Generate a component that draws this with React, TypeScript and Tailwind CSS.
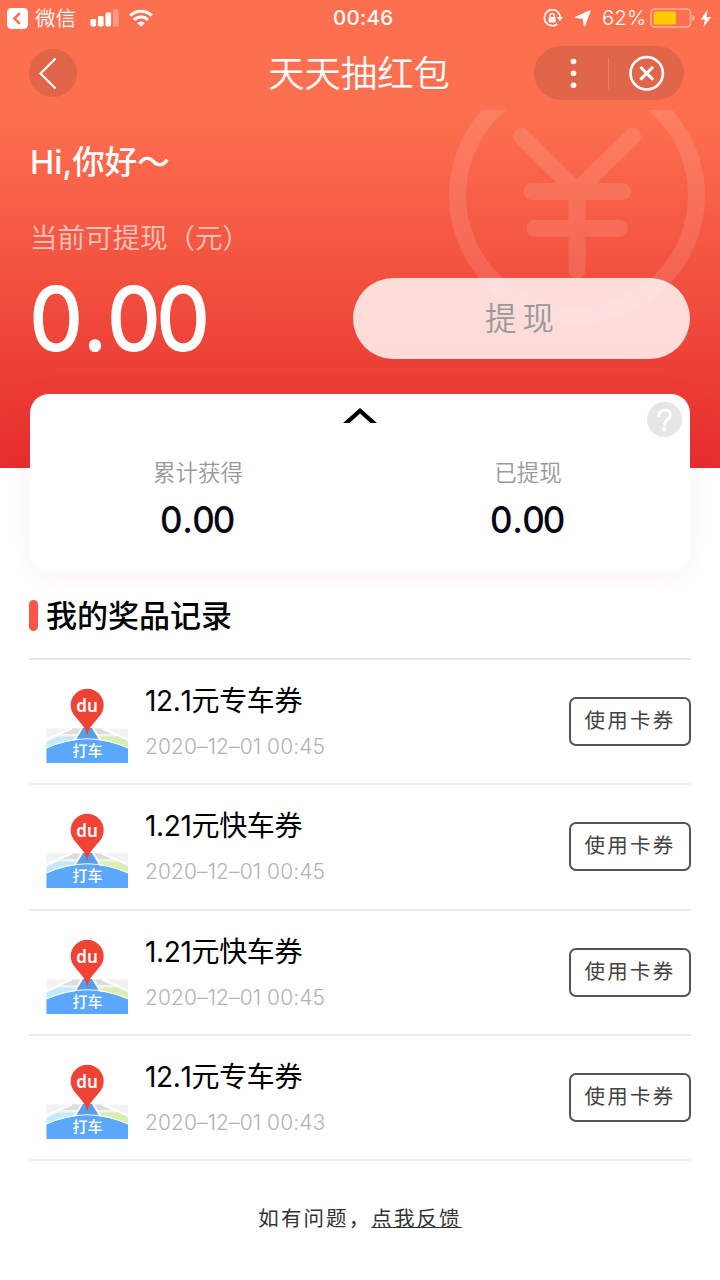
const CJK = "font-['Inter','Noto_Sans_CJK_SC',sans-serif]";

const RECORDS = [
  { title: "12.1元专车券", time: "2020–12–01 00:45" },
  { title: "1.21元快车券", time: "2020–12–01 00:45" },
  { title: "1.21元快车券", time: "2020–12–01 00:45" },
  { title: "12.1元专车券", time: "2020–12–01 00:43" },
];

function StatusBar() {
  return (
    <div className="grid h-9 grid-cols-[333px_60px_1fr] items-center text-white">
      <div className="flex h-9 items-center pl-[7px]">
        <svg width="21" height="21" viewBox="0 0 21 21">
          <rect width="21" height="21" rx="4.5" fill="#fff" />
          <path d="M12.8 5.2 7.4 10.5l5.4 5.3" fill="none" stroke="#fb6f4e" strokeWidth="2.5" />
        </svg>
        <span className="ml-[7px] pt-px text-[20.5px] leading-[35px] font-[350]">微信</span>
        <svg className="ml-[14px]" width="29" height="18" viewBox="0 0 29 18">
          <rect x="0.5" y="10" width="5.6" height="7.5" rx="1.4" fill="#fff" />
          <rect x="8" y="7" width="5.6" height="10.5" rx="1.4" fill="#fff" />
          <rect x="15.5" y="3.5" width="5.6" height="14" rx="1.4" fill="#fff" />
          <rect x="23" y="0.5" width="5.6" height="17" rx="1.4" fill="#fff" fillOpacity="0.3" />
        </svg>
        <svg className="ml-[10px]" width="24" height="18" viewBox="0 0 24 18">
          <g fill="none" stroke="#fff" strokeWidth="3.2">
            <path d="M1.2 6.7a15.3 15.3 0 0 1 21.6 0" />
            <path d="M5 10.9a9.9 9.9 0 0 1 14 0" />
          </g>
          <path d="M8.2 14a5.4 5.4 0 0 1 7.6 0L12 17.8z" fill="#fff" />
        </svg>
      </div>
      <span className="text-center text-[20.5px] leading-9 font-medium tracking-[0.3px] whitespace-nowrap">
        00:46
      </span>
      <div className="flex h-9 items-center pl-[150px]">
        <svg className="shrink-0" width="20" height="18" viewBox="0 0 20 18">
          <path
            d="M15.6 3.7A8 8 0 1 0 14.3 15M15.6 3.7A8 8 0 0 1 17 9"
            fill="none"
            stroke="#fff"
            strokeWidth="1.6"
          />
          <path d="M13.8 8h6l-3 4z" fill="#fff" />
          <rect x="5.6" y="8" width="7" height="5.4" rx="0.8" fill="#fff" />
          <path d="M7 8.4V6.6a2.1 2.1 0 0 1 4.2 0v1.8" fill="none" stroke="#fff" strokeWidth="1.3" />
        </svg>
        <svg className="ml-3 shrink-0" width="16" height="17" viewBox="0 0 16 17">
          <path
            d="M15 1 9.4 15.7 8.5 8.2.8 7.3z"
            fill="#fff"
            stroke="#fff"
            strokeWidth="1.4"
            strokeLinejoin="round"
          />
        </svg>
        <span className="ml-[11px] w-[47px] text-[20.5px] leading-9 font-[350]">62%</span>
        <svg className="ml-[1px] shrink-0" width="46" height="20" viewBox="0 0 46 20">
          <rect x="1" y="1" width="39.5" height="18" rx="4" fill="none" stroke="#fff" strokeOpacity="0.45" strokeWidth="1.6" />
          <rect x="3.7" y="3.6" width="22.3" height="12.8" rx="1.5" fill="#ffcc00" />
          <path d="M42.3 6.7c3.2 1 3.2 5.6 0 6.6z" fill="#fff" fillOpacity="0.45" />
        </svg>
        <svg className="ml-[4px] shrink-0" width="12" height="19" viewBox="0 0 12 19">
          <path d="M7.6.5.8 10.5h4.1L3.4 18.3 11 7.9H6.5z" fill="#fff" />
        </svg>
      </div>
    </div>
  );
}

function NavBar() {
  return (
    <div className="flex h-[74px] items-center justify-between pr-9 pl-[29px]">
      <button className="flex size-12 items-center justify-center rounded-full bg-[#e16548]">
        <svg width="48" height="48" viewBox="0 0 48 48">
          <path d="M26.5 9.5 11.5 24.5l15 15" fill="none" stroke="#fff" strokeWidth="2.2" />
        </svg>
      </button>
      <h1 className="ml-[107px] pt-[2px] text-[36.3px] leading-[74px] font-[350] text-white">天天抽红包</h1>
      <div className="flex h-[54px] w-[150px] items-center rounded-full bg-[#e16548]">
        <svg width="150" height="54" viewBox="0 0 150 54">
          <g fill="#fff">
            <circle cx="39.5" cy="15.5" r="2.8" />
            <circle cx="39.5" cy="27.2" r="2.8" />
            <circle cx="39.5" cy="39.2" r="2.8" />
          </g>
          <path d="M74.5 11.5v32" stroke="#fff" strokeOpacity="0.18" />
          <circle cx="112.7" cy="27.3" r="16.2" fill="none" stroke="#fff" strokeWidth="2.6" />
          <path d="m106.4 21 12.6 12.6m0-12.6-12.6 12.6" stroke="#fff" strokeWidth="3" />
        </svg>
      </div>
    </div>
  );
}

function YenMark() {
  return (
    <svg className="absolute top-[110px] right-0" width="290" height="230" viewBox="430 110 290 230">
      <g opacity="0.11" fill="none" stroke="#fff" strokeWidth="17" strokeLinecap="round">
        <circle cx="577" cy="195.5" r="119.5" />
        <path d="m521.5 136.5 55.5 54.5 55.5-54.5" strokeLinejoin="round" />
        <path d="M532 191.5h90.5M535 228.5h84.5M577 192v78" />
      </g>
    </svg>
  );
}

function CouponLogo() {
  return (
    <svg width="82" height="75" viewBox="0 0 82 75" className="shrink-0">
      <path d="M.5 40.500h81.500V75H.5z" fill="#f2f2f2" />
      <path d="M24 40.500h34l8 5.500H15z" fill="#dcdcdc" />
      <path d="M.5 54 12 48.500h22L29 62H.5z" fill="#c3e9fd" />
      <path d="M50 48.500h22l10 5V62H55z" fill="#d5f0b0" />
      <path d="M0 51.500 26 40.500M82 51.500 56 40.500" stroke="#fff" strokeWidth="2" />
      <path d="M35.500 40h12l9 17h-30z" fill="#569eea" />
      <path d="M36 40 28 53M47 40 55 53" stroke="#fff" strokeWidth="2" />
      <path d="M.5 60.500Q41.300 42.500 82 60.500V75H.5z" fill="#5ba7fd" />
      <path d="M.5 59.800Q41.300 41.800 82 59.800" fill="none" stroke="#fff" strokeWidth="1" />
      <path d="M41.200 48c-1.500-9-7-13-12-19.500a16.500 16.500 0 1 1 24 0c-5 6.500-10.500 10.500-12 19.500z" fill="#f04336" />
      <text
        x="41"
        y="23.5"
        textAnchor="middle"
        className="fill-white font-['Noto_Sans',sans-serif] text-[17px] font-semibold"
      >
        du
      </text>
      <text
        x="41.5"
        y="67.5"
        textAnchor="middle"
        className="fill-white font-['Noto_Sans_CJK_SC',sans-serif] text-[15px] font-medium"
      >
        打车
      </text>
    </svg>
  );
}

// Slightly condensed digits with a little air around the decimal point.
function Amount({ value }: { value: string }) {
  const [whole, cents] = value.split(".");
  return (
    <span className="inline-block origin-left scale-x-[0.945] font-medium tracking-[-0.06em]">
      {whole}
      <span className="mx-[0.048em]">.</span>
      {cents}
    </span>
  );
}

function Stat({ label, value }: { label: string; value: string }) {
  return (
    <div className="flex flex-1 flex-col items-center">
      <span className="pt-px text-[22.5px] leading-8 font-[350] text-[#999]">{label}</span>
      <div className="mt-[13px] pl-[2px] text-[37px] leading-[36px] text-[#070716]">
        <Amount value={value} />
      </div>
    </div>
  );
}

function SummaryCard() {
  return (
    <section className="relative mx-[30px] -mt-[74px] h-[178px] rounded-[19px] bg-white shadow-[0_4px_30px_rgba(240,60,50,0.07)]">
      <div className="flex h-[62px] justify-center pt-[14px]">
        <svg width="34" height="15" viewBox="0 0 34 15">
          <path d="M0 15 17 0l17 15h-6.5L17 5.5 6.5 15z" fill="#000" />
        </svg>
      </div>
      <button className="absolute top-2 right-2 flex size-[35px] items-center justify-center rounded-full bg-[#e6e6e6]">
        <svg width="35" height="35" viewBox="0 0 35 35">
          <path
            d="M12 13.500c0-7.500 11.300-7.200 11.300-.5 0 4.500-5.800 4.800-5.800 9.500"
            fill="none"
            stroke="#fff"
            strokeWidth="3"
            strokeLinecap="round"
          />
          <circle cx="17.3" cy="27.2" r="2.2" fill="#fff" />
        </svg>
      </button>
      <div className="-mr-[3px] flex pl-[3px]">
        <Stat label="累计获得" value="0.00" />
        <Stat label="已提现" value="0.00" />
      </div>
    </section>
  );
}

function RecordRow({ title, time }: { title: string; time: string }) {
  return (
    <li className="flex h-[125.25px] border-b-2 border-[#ebebeb] pl-[17px]">
      <div className="pt-[28px]">
        <CouponLogo />
      </div>
      <div className="ml-[17px] flex flex-1 flex-col pt-[21px]">
        <span className="text-[28px] leading-10 tracking-[-0.35px] text-black [font-kerning:none]">{title}</span>
        <span className="mt-[11px] text-[21px] leading-[30px] font-[350] tracking-[0.1px] text-[#b3b3b3]">
          {time}
        </span>
      </div>
      <button className="mt-[37px] h-[49px] w-[122px] rounded-[7px] border-2 border-[#555] pb-[2px] text-[20.5px] leading-[43px] tracking-[2.2px] text-[#444]">
        使用卡券
      </button>
    </li>
  );
}

export default function App() {
  return (
    <div className={`min-h-[1280px] w-[720px] overflow-hidden bg-white ${CJK}`}>
      <header className="relative h-[468px] bg-[linear-gradient(180deg,#fd704f_0px,#fd704f_110px,#e62d2d_468px)]">
        <YenMark />
        <StatusBar />
        <NavBar />
        <div className="relative pr-[30px] pl-[30px] text-white">
          <p className="h-[73px] pt-[33px] text-[32.5px] leading-10 font-medium">Hi,你好～</p>
          <p className="mt-[35px] h-10 text-[27.5px] leading-10 font-[350] text-white/65">当前可提现（元）</p>
          <div className="mt-5 flex items-start justify-between">
            <div className="-ml-px text-[89px] leading-[81px]">
              <Amount value="0.00" />
            </div>
            <button className="h-[81px] w-[337px] rounded-full bg-[#fffafa]/83 pt-px pl-[2px] text-[31.5px] leading-[80px] font-[350] tracking-[6px] text-[#999]">
              提现
            </button>
          </div>
        </div>
      </header>

      <SummaryCard />

      <main className="px-[29px]">
        <div className="mt-[23px] flex h-10 items-center">
          <span className="h-[31px] w-[9px] rounded-full bg-[#fb5449]" />
          <h2 className="ml-2 pt-px text-[31px] leading-10 font-medium text-black">我的奖品记录</h2>
        </div>
        <ul className="mt-[23px] border-t-2 border-[#e6e6e6]">
          {RECORDS.map((record, i) => (
            <RecordRow key={i} {...record} />
          ))}
        </ul>
        <p className="mt-[42px] text-center text-[20.5px] leading-8 tracking-[2.1px] text-[#333]">
          如有问题，
          <a className="underline decoration-1 underline-offset-[1px]">点我反馈</a>
        </p>
      </main>
    </div>
  );
}
